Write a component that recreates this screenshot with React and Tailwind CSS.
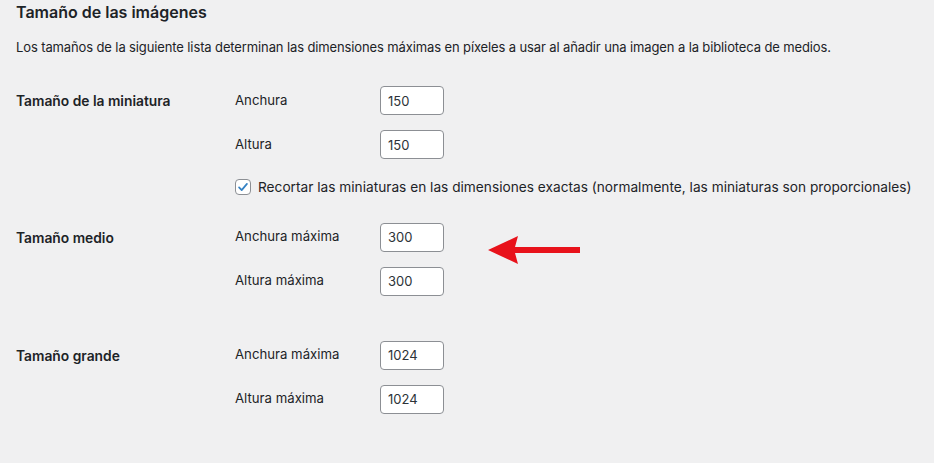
import { useState } from 'react';

const font = { fontFamily: 'Inter, "Noto Sans", sans-serif' };

const NumberField = ({ label, value }) => {
  const [val, setVal] = useState(value);
  return (
    <div className="flex items-center h-[29px]">
      <label className="w-[145px] text-[13.2px] text-[#1d2327]">{label}</label>
      <input
        type="text"
        value={val}
        onChange={(e) => setVal(e.target.value)}
        className="w-[64px] h-[29px] rounded-[4px] border border-[#8c8f94] bg-white px-[7px] text-[13px] text-[#2c3338] outline-none"
      />
    </div>
  );
};

const SizeRow = ({ title, fields, children, className = '' }) => (
  <div className={`flex ${className}`}>
    <div className="w-[219px] pt-[5px] text-[13.8px] font-semibold text-[#1d2327]">{title}</div>
    <div className="flex flex-col gap-[15px]">
      {fields.map((f) => (
        <NumberField key={f.label} label={f.label} value={f.value} />
      ))}
      {children}
    </div>
  </div>
);

const App = () => {
  const [crop, setCrop] = useState(true);

  return (
    <div className="w-[934px] h-[463px] overflow-hidden bg-[#f0f0f1] pl-4" style={font}>
      <h2 className="pt-0 text-[16px] font-semibold text-[#1d2327] leading-[24px]">
        Tamaño de las imágenes
      </h2>
      <p className="mt-[13px] text-[13px] tracking-[-0.12px] text-[#1d2327] leading-[20px]">
        Los tamaños de la siguiente lista determinan las dimensiones máximas en píxeles a usar al añadir una imagen a la biblioteca de medios.
      </p>

      <SizeRow
        title="Tamaño de la miniatura"
        className="mt-[29px]"
        fields={[
          { label: 'Anchura', value: '150' },
          { label: 'Altura', value: '150' },
        ]}
      >
        <label className="flex items-center gap-[7px] pt-[3px] text-[13.7px] text-[#1d2327] cursor-pointer">
          <span
            onClick={() => setCrop(!crop)}
            className="flex h-[16px] w-[16px] items-center justify-center rounded-[4px] border border-[#8c8f94] bg-white"
          >
            {crop && (
              <svg viewBox="0 0 16 16" className="h-[14px] w-[14px]">
                <path d="M3.5 8.5 L6.5 11.5 L12.5 4.5" fill="none" stroke="#3582c4" strokeWidth="2" strokeLinecap="round" strokeLinejoin="round" />
              </svg>
            )}
          </span>
          Recortar las miniaturas en las dimensiones exactas (normalmente, las miniaturas son proporcionales)
        </label>
      </SizeRow>

      <div className="relative">
        <SizeRow
          title="Tamaño medio"
          className="mt-[25px]"
          fields={[
            { label: 'Anchura máxima', value: '300' },
            { label: 'Altura máxima', value: '300' },
          ]}
        />
        {/* red annotation arrow */}
        <svg viewBox="0 0 94 30" className="absolute left-[472px] top-[13px] h-[30px] w-[94px]">
          <polygon points="0,14 30,0 27,11 92,11 92,17 27,17 30,28" fill="#e8121b" />
        </svg>
      </div>

      <SizeRow
        title="Tamaño grande"
        className="mt-[45px]"
        fields={[
          { label: 'Anchura máxima', value: '1024' },
          { label: 'Altura máxima', value: '1024' },
        ]}
      />
    </div>
  );
};

export default App;
